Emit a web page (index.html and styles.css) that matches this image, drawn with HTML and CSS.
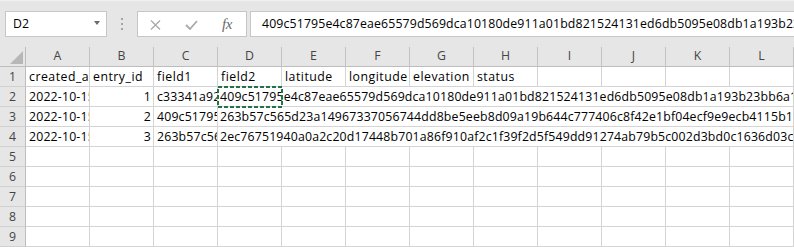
FILE: index.html
```html
<!DOCTYPE html>
<html>
<head>
<meta charset="utf-8">
<title>Sheet</title>
<link rel="stylesheet" href="styles.css">
</head>
<body>
<div class="fbar">
  <div class="namebox"><span class="nb-text">D2</span><span class="caret"></span></div>
  <div class="grip"><i></i><i></i><i></i></div>
  <div class="btns">
    <svg class="ic-x" width="11" height="10" viewBox="0 0 11 10"><path d="M1 0.5 L10 9.5 M10 0.5 L1 9.5" stroke="#a9a9a9" stroke-width="1.3" fill="none"/></svg>
    <svg class="ic-ok" width="13" height="10" viewBox="0 0 13 10"><path d="M1 5 L5 9 L12 1" stroke="#a9a9a9" stroke-width="1.8" fill="none"/></svg>
    <span class="fx">fx</span>
  </div>
  <div class="finput">409c51795e4c87eae65579d569dca10180de911a01bd821524131ed6db5095e08db1a193b23bb6a1f07c2d9e4b</div>
</div>

<div class="sheet">
  <div class="corner"><svg width="13" height="13" viewBox="0 0 13 13"><path d="M13 0 L13 13 L0 13 Z" fill="#b7b7b7"/></svg></div>
  <div class="ch">A</div><div class="ch">B</div><div class="ch">C</div><div class="ch">D</div>
  <div class="ch">E</div><div class="ch">F</div><div class="ch">G</div><div class="ch">H</div>
  <div class="ch">I</div><div class="ch">J</div><div class="ch">K</div><div class="ch">L</div>

  <div class="rh">1</div>
  <div class="c lbl">created_at</div><div class="c lbl">entry_id</div><div class="c lbl">field1</div><div class="c lbl">field2</div>
  <div class="c lbl">latitude</div><div class="c lbl">longitude</div><div class="c lbl">elevation</div><div class="c lbl">status</div>
  <div class="c"></div><div class="c"></div><div class="c"></div><div class="c"></div>

  <div class="rh">2</div>
  <div class="c">2022-10-15T10:22:31+00:00</div><div class="c num">1</div><div class="c">c33341a92b4e07d1</div>
  <div class="c span r2">409c51795e4c87eae65579d569dca10180de911a01bd821524131ed6db5095e08db1a193b23bb6a1f07c2d9e4b</div>
  <div class="marquee"><svg width="66" height="22" viewBox="0 0 66 22"><rect x="1" y="1" width="64" height="20" fill="none" stroke="#217346" stroke-width="2" stroke-dasharray="4 2"/></svg></div>

  <div class="rh">3</div>
  <div class="c">2022-10-15T10:24:02+00:00</div><div class="c num">2</div><div class="c">409c51795e4c87eae</div>
  <div class="c span r3">263b57c565d23a14967337056744dd8be5eeb8d09a19b644c777406c8f42e1bf04ecf9e9ecb4115b1a8d03f6</div>

  <div class="rh">4</div>
  <div class="c">2022-10-15T10:25:47+00:00</div><div class="c num">3</div><div class="c">263b57c565d23a149</div>
  <div class="c span r4">2ec76751940a0a2c20d17448b701a86f910af2c1f39f2d5f549dd91274ab79b5c002d3bd0c1636d03c2e91b7</div>

  <div class="rh">5</div>
  <div class="c"></div><div class="c"></div><div class="c"></div><div class="c"></div><div class="c"></div><div class="c"></div>
  <div class="c"></div><div class="c"></div><div class="c"></div><div class="c"></div><div class="c"></div><div class="c"></div>
  <div class="rh">6</div>
  <div class="c"></div><div class="c"></div><div class="c"></div><div class="c"></div><div class="c"></div><div class="c"></div>
  <div class="c"></div><div class="c"></div><div class="c"></div><div class="c"></div><div class="c"></div><div class="c"></div>
  <div class="rh">7</div>
  <div class="c"></div><div class="c"></div><div class="c"></div><div class="c"></div><div class="c"></div><div class="c"></div>
  <div class="c"></div><div class="c"></div><div class="c"></div><div class="c"></div><div class="c"></div><div class="c"></div>
  <div class="rh">8</div>
  <div class="c"></div><div class="c"></div><div class="c"></div><div class="c"></div><div class="c"></div><div class="c"></div>
  <div class="c"></div><div class="c"></div><div class="c"></div><div class="c"></div><div class="c"></div><div class="c"></div>
  <div class="rh">9</div>
  <div class="c"></div><div class="c"></div><div class="c"></div><div class="c"></div><div class="c"></div><div class="c"></div>
  <div class="c"></div><div class="c"></div><div class="c"></div><div class="c"></div><div class="c"></div><div class="c"></div>
</div>
</body>
</html>
```

FILE: styles.css
```css
* { box-sizing: border-box; }
html, body {
  margin: 0;
  padding: 0;
}
body {
  width: 794px;
  height: 247px;
  overflow: hidden;
  background: #ffffff;
  font-family: "Open Sans", "Noto Sans", sans-serif;
  font-size: 12.3px;
  color: #000;
}

/* formula bar */
.fbar {
  height: 47px;
  background: #e6e6e6;
  border-top: 1px solid #f1f1f1;
  padding-top: 10px;
  display: flex;
  align-items: flex-start;
  overflow: hidden;
}
.fbar > * { flex: none; }
.namebox {
  margin-left: 5px;
  width: 102px;
  height: 26px;
  background: #fff;
  border: 1px solid #c6c6c6;
  display: flex;
  align-items: center;
  justify-content: space-between;
  padding: 0 6px 0 7px;
  line-height: 24px;
}
.caret {
  width: 0;
  height: 0;
  border-left: 3.5px solid transparent;
  border-right: 3.5px solid transparent;
  border-top: 4px solid #6b6b6b;
  margin-bottom: 3px;
}
.grip {
  width: 30px;
  height: 26px;
  display: flex;
  flex-direction: column;
  align-items: center;
  justify-content: center;
  gap: 3px;
}
.grip i {
  display: block;
  width: 2px;
  height: 2px;
  background: #a3a3a3;
}
.btns {
  width: 110px;
  height: 26px;
  background: #fff;
  border: 1px solid #c6c6c6;
  display: flex;
  align-items: center;
  padding-left: 12px;
}
.ic-x { flex: none; margin-top: 1px; }
.ic-ok { flex: none; margin-left: 24px; margin-top: 2px; }
.fx {
  margin-left: 24px;
  font-family: "Liberation Serif", "DejaVu Serif", serif;
  font-style: italic;
  font-size: 15px;
  color: #6a6a6a;
  letter-spacing: -0.5px;
}
.finput {
  width: 620px;
  height: 26px;
  margin-left: 3px;
  background: #fff;
  border: 1px solid #c6c6c6;
  padding-left: 11px;
  line-height: 24px;
  white-space: nowrap;
  overflow: hidden;
  letter-spacing: 0.14px;
}

/* sheet */
.sheet {
  display: grid;
  grid-template-columns: 26px repeat(12, 64px);
  grid-template-rows: repeat(10, 20px);
}
.corner {
  background: #e6e6e6;
  border-right: 1px solid #bdbdbd;
  border-bottom: 1px solid #bdbdbd;
  display: flex;
  align-items: flex-end;
  justify-content: flex-end;
  padding: 0 2px 2px 0;
}
.corner svg { display: block; }
.ch {
  background: #e6e6e6;
  border-right: 1px solid #c3c3c3;
  border-bottom: 1px solid #bdbdbd;
  text-align: center;
  line-height: 18px;
  color: #444;
}
.rh {
  background: #e6e6e6;
  border-right: 1px solid #bdbdbd;
  border-bottom: 1px solid #d0d0d0;
  text-align: center;
  line-height: 18px;
  padding-top: 1px;
  color: #444;
}
.c {
  border-right: 1px solid #d4d4d4;
  border-bottom: 1px solid #d4d4d4;
  padding: 1px 2px 0 3px;
  line-height: 18px;
  white-space: nowrap;
  overflow: hidden;
  letter-spacing: 0.17px;
}
.c.lbl { letter-spacing: 0.5px; }
.c.num { text-align: right; }
.c.span {
  grid-column: 5 / 14;
  padding-left: 2px;
}
.c.span.r2 { grid-row: 3; }
.c.span.r3 { grid-row: 4; }
.c.span.r4 { grid-row: 5; }
.marquee {
  grid-column: 5 / 6;
  grid-row: 3 / 4;
  margin: -1px;
  pointer-events: none;
  z-index: 1;
}
.marquee svg { display: block; }
```
